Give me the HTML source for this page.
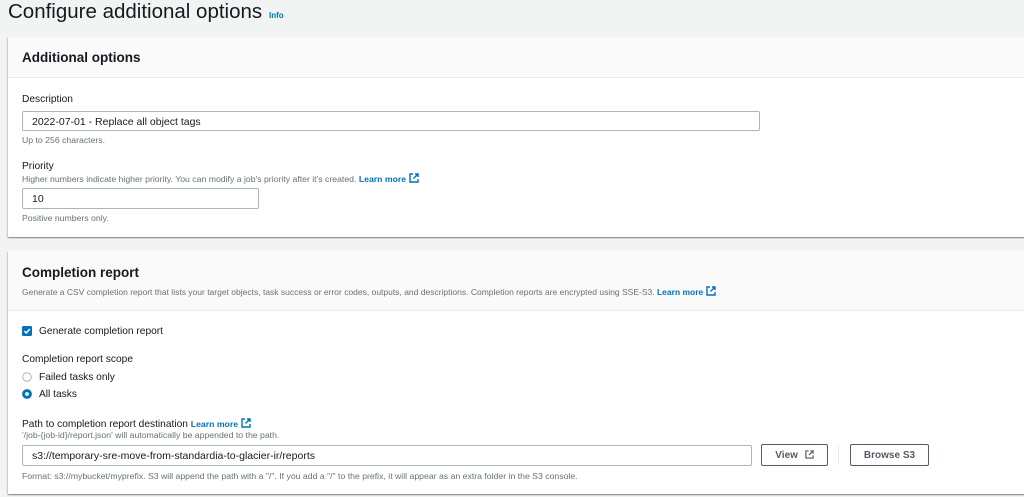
<!DOCTYPE html>
<html><head><meta charset="utf-8"><style>
*{box-sizing:border-box;margin:0;padding:0}
body{width:1024px;height:497px;overflow:hidden;background:#f2f3f3;font-family:"Liberation Sans",Arial,sans-serif;color:#16191f;position:relative}
.a{position:absolute;white-space:nowrap}
.panel{position:absolute;left:8px;width:1030px;background:#fff;box-shadow:0 1px 1px 0 rgba(0,28,36,.3),1px 1px 1px 0 rgba(0,28,36,.15),-1px 1px 1px 0 rgba(0,28,36,.15)}
.hd{position:absolute;left:0;top:0;width:100%;background:#fafafa;border-bottom:1px solid #eaeded}
.lbl{font-size:10.2px;color:#16191f}
.sm{font-size:8.7px;color:#687078}
.lnk{color:#0073bb;font-weight:bold}
.inp{position:absolute;border:1px solid #aab7b8;border-radius:2px;background:#fff;font-size:10.5px;padding:4px 0 0 9px}
.btn{position:absolute;border:1px solid #545b64;border-radius:2px;background:#fff;font-size:10px;font-weight:bold;color:#545b64;text-align:center;padding-top:5px}
</style></head><body>
<div class="a" style="left:8px;top:0px;font-size:20.5px;color:#16191f">Configure additional options</div>
<div class="a lnk" style="left:269px;top:11px;font-size:8px">Info</div>

<div class="panel" style="top:37px;height:200px">
 <div class="hd" style="height:41px"></div>
 <div class="a" style="left:14px;top:13px;font-size:13.5px;font-weight:bold">Additional options</div>
 <div class="a lbl" style="left:14px;top:57px">Description</div>
 <div class="inp" style="left:14px;top:74px;width:738px;height:20px">2022-07-01 - Replace all object tags</div>
 <div class="a sm" style="left:14px;top:98px">Up to 256 characters.</div>
 <div class="a lbl" style="left:14px;top:124px">Priority</div>
 <div class="a sm" style="left:14px;top:136px">Higher numbers indicate higher priority. You can modify a job's priority after it's created. <span class="lnk">Learn more</span> <svg width="10" height="10" viewBox="0 0 10 10" style="vertical-align:-1px"><path d="M4 1H1v8h8V6M6 1h3v3M9 1L4.5 5.5" fill="none" stroke="#0073bb" stroke-width="1.4"/></svg></div>
 <div class="inp" style="left:14px;top:151px;width:237px;height:21px">10</div>
 <div class="a sm" style="left:14px;top:176px">Positive numbers only.</div>
</div>

<div class="panel" style="top:251px;height:243px">
 <div class="hd" style="height:60px"></div>
 <div class="a" style="left:14px;top:14px;font-size:13.5px;font-weight:bold">Completion report</div>
 <div class="a sm" style="left:14px;top:35px;font-size:8.5px">Generate a CSV completion report that lists your target objects, task success or error codes, outputs, and descriptions. Completion reports are encrypted using SSE-S3. <span class="lnk">Learn more</span> <svg width="10" height="10" viewBox="0 0 10 10" style="vertical-align:-1px"><path d="M4 1H1v8h8V6M6 1h3v3M9 1L4.5 5.5" fill="none" stroke="#0073bb" stroke-width="1.4"/></svg></div>
 <svg class="a" style="left:14px;top:75px" width="10" height="10" viewBox="0 0 10 10"><rect width="10" height="10" rx="1.5" fill="#0073bb"/><path d="M2.3 5l2 2 3.5-4" fill="none" stroke="#fff" stroke-width="1.5"/></svg>
 <div class="a lbl" style="left:31px;top:75px">Generate completion report</div>
 <div class="a lbl" style="left:14px;top:103px">Completion report scope</div>
 <svg class="a" style="left:14px;top:121px" width="10" height="10"><circle cx="5" cy="5" r="4.3" fill="#fff" stroke="#aab7b8"/></svg>
 <div class="a lbl" style="left:31px;top:121px">Failed tasks only</div>
 <svg class="a" style="left:14px;top:138px" width="10" height="10"><circle cx="5" cy="5" r="3.4" fill="#fff" stroke="#0073bb" stroke-width="3"/></svg>
 <div class="a lbl" style="left:31px;top:138px">All tasks</div>
 <div class="a lbl" style="left:14px;top:167px">Path to completion report destination <span class="lnk" style="font-size:8.7px">Learn more</span> <svg width="10" height="10" viewBox="0 0 10 10" style="vertical-align:-1px"><path d="M4 1H1v8h8V6M6 1h3v3M9 1L4.5 5.5" fill="none" stroke="#0073bb" stroke-width="1.4"/></svg></div>
 <div class="a sm" style="left:14px;top:179px">'/job-{job-id}/report.json' will automatically be appended to the path.</div>
 <div class="inp" style="left:14px;top:194px;width:730px;height:21px">s3://temporary-sre-move-from-standardia-to-glacier-ir/reports</div>
 <div class="btn" style="left:753px;top:193px;width:67px;height:22px">View <svg width="9" height="9" viewBox="0 0 10 10" style="vertical-align:-1px;margin-left:4px"><path d="M4 1H1v8h8V6M6 1h3v3M9 1L4.5 5.5" fill="none" stroke="#545b64" stroke-width="1.3"/></svg></div>
 <div class="a" style="left:830px;top:194px;width:1px;height:20px;background:#eaeded"></div>
 <div class="btn" style="left:842px;top:193px;width:79px;height:22px">Browse S3</div>
 <div class="a sm" style="left:14px;top:220px">Format: s3://mybucket/myprefix. S3 will append the path with a "/". If you add a "/" to the prefix, it will appear as an extra folder in the S3 console.</div>
</div>
</body></html>
